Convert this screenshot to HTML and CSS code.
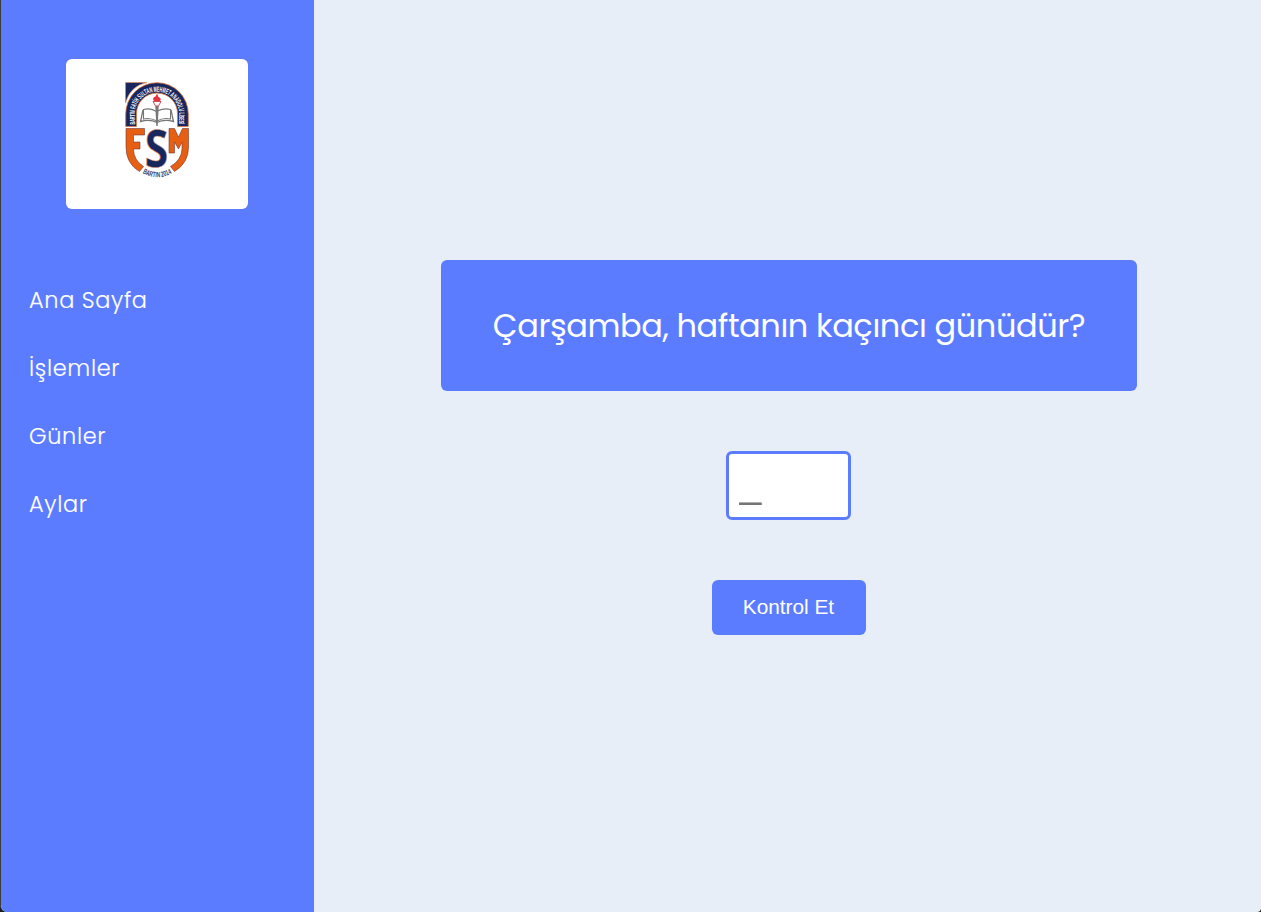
FILE: index.html
```html
<!DOCTYPE html>
<html lang="tr">
<head>
<meta charset="utf-8">
<title>Günler</title>
<link rel="stylesheet" href="styles.css">
</head>
<body>
<div class="window">
  <aside class="sidebar">
    <div class="logo-card">
      <svg class="logo" viewBox="110 70 94 120" aria-label="Bartın Fatih Sultan Mehmet Anadolu Lisesi">
        <defs>
          <path id="arch" d="M134.800 124.500V114A22.200 22.200 0 0 1 179.200 114V124.500"/>
          <path id="base" d="M141.500 172.500Q157 182 173 172.500"/>
        </defs>
        <path d="M125.500 82.500H147Q130 86 125.500 103Z" fill="#17265c" stroke="#e9894f" stroke-width=".6"/>
        <path d="M125.700 126.500V114A31.300 31.300 0 0 1 188.300 114V126.500H177.500V113.500A20.500 20.500 0 0 0 136.500 113.500V126.500Z" fill="#17265c" stroke="#e17a3f" stroke-width=".8"/>
        <text class="arch-text" textLength="90" lengthAdjust="spacingAndGlyphs"><textPath href="#arch" textLength="90" lengthAdjust="spacingAndGlyphs">BARTIN FATİH SULTAN MEHMET ANADOLU LİSESİ</textPath></text>
        <path d="M143.500 109.500Q151 107.500 156.500 111.500Q163 107.500 170.500 109.500V119Q163 117.500 157 121Q150 117.500 143.500 119Z" fill="#fff" stroke="#777" stroke-width="1.100"/>
        <path d="M143 110L140.500 121.500Q150 119 157 122.500Q164 119 173.500 121.500L171 110" fill="none" stroke="#777" stroke-width="1.300"/>
        <path d="M155.300 106H158.700L157.700 126H156.300Z" fill="#777"/>
        <path d="M153 101.500H161L158.500 106H155.500Z" fill="#fff" stroke="#c93d4c" stroke-width=".9"/>
        <path d="M154 101Q151.500 98 155.500 96.500L157 93.500L158.500 97Q162 98.500 160 101Z" fill="#e2343f"/>
        <g fill="#e65f12" stroke="#713b3a" stroke-width=".6">
          <path d="M126 128.500H144.500V135H133.500V142H140V149H133.500Q133.500 160 143.500 166.500L139.500 171.500Q126 163.500 126 147Z"/>
          <path d="M169 128.500H174.500L178.500 137L182.500 128.500H188.500V147Q188.500 163 174.500 171.500L170.500 166.500Q181.500 160 182 149V142L178.500 149L174.500 142V153H169Z"/>
        </g>
        <text class="logo-s" transform="translate(144.700 167.200) scale(.82 1)">S</text>
        <text class="base-text" textLength="31" lengthAdjust="spacingAndGlyphs"><textPath href="#base" startOffset="1" textLength="31" lengthAdjust="spacingAndGlyphs">BARTIN 2014</textPath></text>
      </svg>
    </div>
    <nav class="menu">
      <a class="link link-home">Ana Sayfa</a>
      <a class="link link-ops">İşlemler</a>
      <a class="link link-days">Günler</a>
      <a class="link link-months">Aylar</a>
    </nav>
  </aside>
  <main class="content">
    <h1 class="question">Çarşamba, haftanın kaçıncı günüdür?</h1>
    <input class="answer" type="text" placeholder="_">
    <button class="check">Kontrol Et</button>
  </main>
</div>
</body>
</html>
```
FILE: styles.css
```css
* { box-sizing: border-box; }
body { margin: 0; background: #1c1c1e; }
.window {
  display: flex;
  height: 912px;
  overflow: hidden;
  background: #e7eef8;
  border-left: 1px solid #3c3c3c;
  border-radius: 0 0 4px 7px;
  font-family: Poppins, Inter, sans-serif;
}
.sidebar {
  width: 313px;
  padding-top: 59px;
  background: #5c7cff;
  display: flex;
  flex-direction: column;
}
.logo-card {
  width: 182px;
  height: 150px;
  margin-left: 65px;
  padding-top: 11px;
  background: #fff;
  border-radius: 6px;
  display: flex;
  justify-content: center;
}
.logo { width: 94px; height: 120px; }
.arch-text { font: bold 7.6px "Liberation Sans", sans-serif; fill: #fff; }
.base-text { font: bold 7.6px "Liberation Sans", sans-serif; fill: #36446f; }
.logo-s { font: 700 52px "Open Sans", sans-serif; fill: #17265c; stroke: #d68b68; stroke-width: .6px; }
.menu {
  display: flex;
  flex-direction: column;
  gap: 34px;
  margin-top: 74px;
  padding-left: 28px;
}
.link {
  height: 34px;
  line-height: 34px;
  font-size: 22.4px;
  font-weight: 300;
  letter-spacing: .68px;
  color: #fff;
  -webkit-text-stroke: .15px #fff;
}
.content {
  flex: 1;
  display: flex;
  flex-direction: column;
  align-items: center;
  gap: 60px;
  padding: 260px 0 0 3px;
}
.question {
  width: 696px;
  height: 131px;
  margin: 0;
  background: #5c7cff;
  border-radius: 6px;
  color: #fff;
  font-size: 32px;
  font-weight: 400;
  line-height: 131px;
  letter-spacing: -.41px;
  text-align: center;
  white-space: nowrap;
}
.answer {
  width: 125px;
  height: 69px;
  margin-right: 1px;
  padding: 6px 10px 10px;
  border: 3px solid #5c7cff;
  border-radius: 6px;
  background: #fff;
  font: 40px "Liberation Sans", Arial, sans-serif;
}
.check {
  width: 154px;
  height: 55px;
  padding: 0 1px 2px 0;
  border: 0;
  border-radius: 6px;
  background: #5c7cff;
  color: #fff;
  font: 20.8px "Liberation Sans", Arial, sans-serif;
}
```
